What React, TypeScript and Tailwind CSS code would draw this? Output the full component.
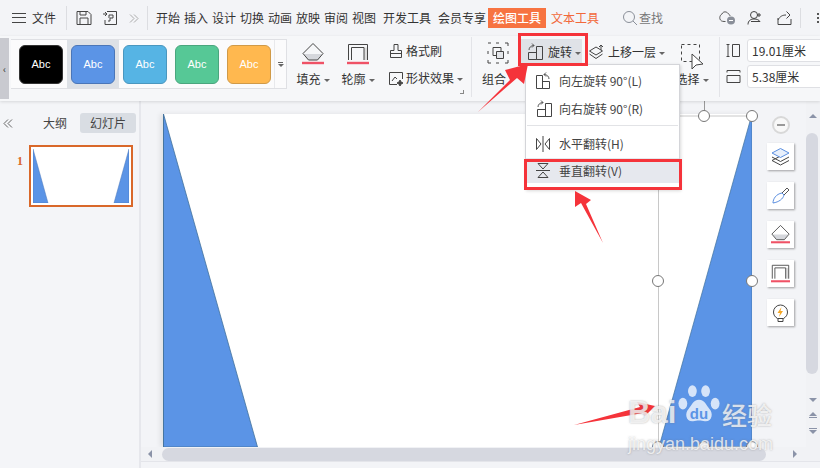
import { ReactNode } from 'react';

const tabs = ['开始', '插入', '设计', '切换', '动画', '放映', '审阅', '视图'];

const styles = [
  { bg: 'bg-black border-[#333]', hover: false },
  { bg: 'bg-[#5b94e6] border-[#4a76b8]', hover: true },
  { bg: 'bg-[#56b4e4] border-[#4a97bf]', hover: false },
  { bg: 'bg-[#56c896] border-[#4aa67e]', hover: false },
  { bg: 'bg-[#ffb84f] border-[#d09a48]', hover: false },
];

function Caret() {
  return <span className="inline-block w-0 h-0 border-x-[3px] border-x-transparent border-t-[3px] border-t-[#666] ml-[3px] mb-[2px]" />;
}

function Icon({ w = 18, h = 18, children }: { w?: number; h?: number; children: ReactNode }) {
  return (
    <svg width={w} height={h} viewBox={`0 0 ${w} ${h}`} fill="none" stroke="#444" strokeWidth="1" className="shrink-0">
      {children}
    </svg>
  );
}

function RotateLeft() {
  return (
    <Icon>
      <path d="M1.500 3.500h6v13h-6zM7.500 9.500h7v7h-7z" />
      <path d="M14 7c0-2.500-2-4.500-5-4.500M11 .5l-2 2 2 2" stroke="#555" />
    </Icon>
  );
}

function RotateRight() {
  return (
    <Icon>
      <path d="M10.500 3.500h6v13h-6zM2.500 9.500h8v7h-8z" />
      <path d="M3 7c0-2.500 2-4.500 5-4.500M6 .5l2 2-2 2" stroke="#555" />
    </Icon>
  );
}

function SideCard({ children }: { children: ReactNode }) {
  return (
    <div className="w-[27px] h-[27px] bg-white flex items-center justify-center shadow-[1px_1px_2px_rgba(0,0,0,0.35)]">
      {children}
    </div>
  );
}

function FillIcon({ size = 22 }: { size?: number }) {
  return (
    <svg width={size} height={size} viewBox="0 0 22 22" fill="none" className="shrink-0">
      <path d="M2 11h18l-4.500 6h-9z" fill="#d5d7dc" />
      <path d="M11 .5 1 10.500 6.500 17h9L21 10.500z" stroke="#444" />
      <path d="M0 20h22" stroke="#ef5266" strokeWidth="2.400" />
    </svg>
  );
}

function OutlineIcon({ size = 22 }: { size?: number }) {
  return (
    <svg width={size} height={size} viewBox="0 0 22 22" fill="none" className="shrink-0">
      <path d="M17 4.500h3.500V17H17z" fill="#ddd" />
      <path d="M1.500 17V1.500h19V17M4.500 17V4.500h12.500V17" stroke="#444" />
      <path d="M0 20h22" stroke="#ef5266" strokeWidth="2.400" />
    </svg>
  );
}

function DoubleChevron({ color, left = false }: { color: string; left?: boolean }) {
  return (
    <svg width="10" height="9" viewBox="0 0 10 9" fill="none" stroke={color} className="shrink-0">
      <path d={left ? 'M5 .5 1 4.500 5 8.500M9 .5 5 4.500 9 8.500' : 'M1 .5 5 4.500 1 8.500M5 .5 9 4.500 5 8.500'} />
    </svg>
  );
}

function Watermark() {
  return (
    <div className="absolute left-[628px] top-[382px] w-[192px] h-[70px] text-white/75 [text-shadow:0_0_2px_rgba(110,110,110,0.55)] pointer-events-none select-none">
      <div className="absolute left-0 top-[14px] text-[31px] leading-[34px] font-bold font-['Liberation_Sans',sans-serif]">Bai</div>
      <svg width="44" height="46" viewBox="0 0 60 56" className="absolute left-[49px] top-0" fill="currentColor">
        <ellipse cx="8" cy="26" rx="6" ry="8" />
        <ellipse cx="21" cy="9" rx="6" ry="8" />
        <ellipse cx="39" cy="9" rx="6" ry="8" />
        <ellipse cx="52" cy="26" rx="6" ry="8" />
        <path d="M30 21c-8 0-10 8-14 12-6 6-4 18 6 17 3 0 5-1 8-1s5 1 8 1c10 1 12-11 6-17-4-4-6-12-14-12z" />
      </svg>
      <div className="absolute left-[59px] top-[24px] w-[24px] text-center text-[#5b94e6] [text-shadow:none] text-[15px] leading-[16px] font-bold font-['Liberation_Sans',sans-serif]">du</div>
      <div className="absolute left-[94px] top-[15px] text-[25px] leading-[34px] font-medium font-['Noto_Sans_CJK_SC',sans-serif]">经验</div>
      <div className="absolute left-0 top-[52px] text-[18px] leading-[20px] font-['Liberation_Sans',sans-serif]">jingyan.baidu.com</div>
    </div>
  );
}

export default function App() {
  return (
    <div className="relative w-[820px] h-[468px] overflow-hidden flex flex-col bg-[#f3f4f7] text-[12px] leading-[16px] text-[#333] font-['Noto_Sans_CJK_SC','Liberation_Sans',sans-serif]">
      {/* Title bar */}
      <div className="h-[36px] flex items-center shrink-0 bg-[#f3f4f7]">
        <div className="ml-[12px] w-[14px] h-[10px] border-y border-[#444] relative shrink-0">
          <div className="absolute left-0 right-0 top-[3px] h-px bg-[#444]" />
        </div>
        <span className="ml-[6px] w-[28px] shrink-0">文件</span>
        <div className="ml-[6px] w-px h-[24px] bg-[#dcdde1] shrink-0" />
        <div className="ml-[9px] flex items-center gap-[10px] shrink-0">
          <Icon w={16} h={16}>
            <path d="M1 1.500h11l3 3v10H1zM4 14.500V8h8v6.500M4 1.500V5h6V1.500" />
          </Icon>
          <Icon w={16} h={16}>
            <path d="M1 4h3M3 6l2-2-2-2M5 1.500h9.500v13H3V10" />
            <path d="M7 8V5h4v3H8v3H6" />
          </Icon>
        </div>
        <span className="ml-[11px] shrink-0">
          <DoubleChevron color="#aaa" />
        </span>
        <div className="ml-[8px] w-px h-[24px] bg-[#dcdde1] shrink-0" />
        <div className="ml-[8px] flex gap-[4px] shrink-0">
          {tabs.map((t) => (
            <span key={t} className="w-[24px]">{t}</span>
          ))}
        </div>
        <span className="ml-[7px] w-[48px] shrink-0">开发工具</span>
        <span className="ml-[7px] w-[48px] shrink-0">会员专享</span>
        <span className="ml-[2px] w-[58px] h-[20px] bg-[#f77341] text-white text-center leading-[20px] font-medium shrink-0">绘图工具</span>
        <span className="ml-[5px] w-[48px] text-[#f2683a] shrink-0">文本工具</span>
        <svg width="16" height="16" viewBox="0 0 16 16" fill="none" stroke="#8a8f99" className="ml-[23px] shrink-0">
          <circle cx="7" cy="7" r="5.500" />
          <path d="M11 11l4 4" />
        </svg>
        <span className="ml-[1px] w-[24px] text-[#777] shrink-0">查找</span>
        <div className="ml-[56px] flex items-center gap-[10px] shrink-0">
          <svg width="18" height="16" viewBox="0 0 18 16" fill="none" stroke="#555" className="shrink-0">
            <path d="M9 3.500C8 1.500 4 1 3 4 1 5 0 8 1.500 10c1 1.500 3 1.500 5 1.500" />
            <path d="M9 3.500c1 .5 2 1.500 2 2.500" />
            <circle cx="12" cy="10.500" r="4" fill="#8a8f99" stroke="none" />
            <path d="M10 10.500h4" stroke="#fff" />
          </svg>
          <Icon w={16} h={16}>
            <circle cx="7" cy="5" r="3.500" />
            <path d="M1 14.500c0-4 3-5.500 6-5.500 3 0 5 1 6 2.500H4M12 3v4M10 5h4" />
          </Icon>
          <span className="ml-[4px]">
            <Icon w={16} h={16}>
              <path d="M1 8v6.500h13V9M1 10c2-4 5-5 8-5M9.500 1.500 13 5l-3.500 3.500" />
            </Icon>
          </span>
        </div>
        <div className="ml-[7px] w-px h-[20px] bg-[#dcdde1] shrink-0" />
        <div className="ml-[16px] flex flex-col gap-[2px] shrink-0">
          <span className="w-[2px] h-[2px] bg-[#555]" />
          <span className="w-[2px] h-[2px] bg-[#555]" />
          <span className="w-[2px] h-[2px] bg-[#555]" />
        </div>
      </div>

      {/* Ribbon */}
      <div className="h-[65px] shrink-0 bg-[#f6f7f9] shadow-[0_1px_3px_rgba(0,0,0,0.12)] flex z-10 relative">
        <div className="w-[9px] h-[61px] mt-[2px] shrink-0 bg-[#c9cad0] flex items-center justify-center text-[10px] text-[#333]">‹</div>
        <div className="ml-[2px] mt-[3px] w-[276px] h-[50px] shrink-0 border border-l-0 border-[#dfe0e4] bg-[#fbfbfc] flex items-center">
          <div className="w-[264px] pl-[8px] flex items-center gap-[8px] border-r border-[#e8e9ec] h-full shrink-0">
            {styles.map((s) => (
              <div key={s.bg} className={s.hover ? 'w-[52px] -mx-[4px] h-full flex items-center justify-center bg-[#dde1e6] shrink-0' : 'w-[44px] h-full flex items-center justify-center shrink-0'}>
                <div className={`w-[44px] h-[39px] rounded-[6px] border flex items-center justify-center text-[11px] text-white font-['Liberation_Sans',sans-serif] ${s.bg}`}>
                  Abc
                </div>
              </div>
            ))}
          </div>
          <div className="flex-1 flex flex-col items-center">
            <div className="w-[5px] h-px bg-[#666] mb-[1px]" />
            <div className="w-0 h-0 border-x-[3px] border-x-transparent border-t-[3px] border-t-[#666]" />
          </div>
        </div>

        <div className="ml-[10px] w-[32px] mt-[7px] flex flex-col items-center gap-[6px] shrink-0">
          <FillIcon />
          <span className="whitespace-nowrap">填充<Caret /></span>
        </div>
        <div className="ml-[13px] w-[32px] mt-[7px] flex flex-col items-center gap-[6px] shrink-0">
          <OutlineIcon />
          <span className="whitespace-nowrap">轮廓<Caret /></span>
        </div>

        <div className="ml-[14px] w-[71px] flex flex-col shrink-0 mt-[7px] gap-[11px]">
          <div className="flex items-center gap-[2px]">
            <Icon w={16} h={16}>
              <path d="M6 1.500h4v6h3.500v7h-11v-7H6zM2.500 10.500h11" />
            </Icon>
            <span>格式刷</span>
          </div>
          <div className="flex items-center gap-[2px] whitespace-nowrap">
            <Icon w={16} h={16}>
              <path d="M9 14.500H1.500v-12h13V9" />
              <path d="M4 11l3-4 2 2" />
              <path d="M12 10l1 2 2 1-2 1-1 2-1-2-2-1 2-1z" fill="#444" />
            </Icon>
            <span>形状效果<Caret /></span>
          </div>
        </div>

        <div className="w-[13px] relative border-r border-[#e3e4e8] mt-[1px] h-[60px] shrink-0">
          <div className="absolute right-[7px] bottom-[3px] w-[4px] h-[4px] border-r border-b border-[#888]" />
        </div>

        <div className="ml-[10px] w-[32px] mt-[6px] flex flex-col items-center gap-[7px] shrink-0">
          <svg width="22" height="22" viewBox="0 0 22 22" fill="none" stroke="#444" className="shrink-0">
            <path d="M6 5.500h8v8H6z" />
            <path d="M9.500 9.500h7v7h-7z" fill="#e4e6ea" />
            <path d="M1 1h3M9 1h3M18 1h3v3M1 9v3M21 9v3M1 18v3h3M9 21h3M18 21h3v-3" />
          </svg>
          <span className="whitespace-nowrap pr-[8px]">组合</span>
        </div>

        <div className="ml-[7px] mt-[3px] w-[61px] h-[25px] bg-[#dfe2e7] flex items-center pl-[5px] gap-[4px] shrink-0">
          <RotateRight />
          <span className="whitespace-nowrap">旋转<Caret /></span>
        </div>
        <div className="ml-[6px] mt-[7px] h-[17px] flex items-center gap-[4px] whitespace-nowrap shrink-0 w-[80px]">
          <Icon w={16} h={16}>
            <path d="M8 3 1.500 7 8 11l6.500-4zM1.500 10 8 14.500l6.500-4.500M13 1v5M11 3l2-2 2 2" />
          </Icon>
          <span>上移一层<Caret /></span>
        </div>
        <div className="ml-[8px] w-[32px] mt-[7px] flex flex-col items-center shrink-0">
          <svg width="24" height="28" viewBox="0 0 24 28" fill="none" className="shrink-0">
            <rect x="1.500" y="1.500" width="18" height="17" stroke="#444" strokeDasharray="3 3" />
            <path d="M12 11v15l4-4 7-1z" fill="#fff" stroke="#444" />
          </svg>
          <span className="whitespace-nowrap">选择<Caret /></span>
        </div>
        <div className="ml-[11px] w-px h-[60px] mt-[1px] bg-[#e3e4e8] shrink-0" />
        <div className="ml-[6px] flex flex-col gap-[3px] mt-[3px] shrink-0">
          <div className="flex items-center gap-[6px]">
            <Icon w={15} h={15}>
              <path d="M.5 1.500h3M.5 13.500h3M2 1.500v12M6.500 1.500h7v12h-7z" />
            </Icon>
            <div className="w-[80px] h-[23px] bg-white border border-[#dfe0e4] rounded-[3px] pl-[4px] leading-[21px] whitespace-nowrap">19.01厘米</div>
          </div>
          <div className="flex items-center gap-[6px]">
            <Icon w={15} h={15}>
              <path d="M1 1.500h13M1 3.500v-2M14 3.500v-2M1 6.500h13v7H1z" />
            </Icon>
            <div className="w-[80px] h-[23px] bg-white border border-[#dfe0e4] rounded-[3px] pl-[4px] leading-[21px] whitespace-nowrap">5.38厘米</div>
          </div>
        </div>
      </div>

      {/* Main */}
      <div className="flex-1 flex min-h-0">
        <div className="w-[141px] shrink-0 bg-[#f4f5f8] pt-[12px] border-r-2 border-[#e6e7ec]">
          <div className="flex items-center h-[20px]">
            <span className="ml-[3px] w-[40px]">
              <DoubleChevron color="#666" left />
            </span>
            <span className="text-[#444]">大纲</span>
            <span className="ml-[13px] w-[56px] h-[20px] rounded-[3px] bg-[#d9dde3] text-center leading-[20px] text-[#444]">幻灯片</span>
          </div>
          <div className="flex mt-[12px]">
            <span className="ml-[17px] w-[12px] mt-[8px] text-[#d9682a] text-[12px] font-bold font-['Liberation_Serif',serif]">1</span>
            <div className="w-[104px] h-[62px] border-2 border-[#d9682a] bg-white p-[2px]">
              <svg width="96" height="54" viewBox="0 0 96 54">
                <path d="M0 0v54h15z" fill="#5b94e6" stroke="#4a76b8" strokeWidth=".5" />
                <path d="M96 0v54H81z" fill="#5b94e6" stroke="#4a76b8" strokeWidth=".5" />
              </svg>
            </div>
          </div>
        </div>

        <div className="flex-1 flex flex-col min-w-0">
          <div className="flex-1 flex min-h-0">
            <div className="flex-1 min-w-0 flex pl-[22px] pt-[13px]">
              <div className="relative w-[589px] h-[333px] bg-white shadow-[-3px_0_5px_rgba(0,0,0,0.08)] shrink-0">
                <svg width="589" height="333" viewBox="0 0 589 333" className="block">
                  <path d="M.5 0v333M.5 0v333h94z" fill="#5b94e6" stroke="#41719c" strokeWidth=".8" />
                  <path d="M589 0v333h-93z" fill="#5b94e6" stroke="#41719c" strokeWidth=".7" />
                  <path d="M495.500 2h94v331h-94z" fill="none" stroke="#c8c8c8" />
                </svg>
                <div className="absolute left-[541px] -top-[14px] w-px h-[16px] bg-[#999]" />
                {[
                  [541, 2],
                  [589, 2],
                  [495, 167],
                  [589, 167],
                  [495, 333],
                  [541, 333],
                  [589, 333],
                ].map(([x, y]) => (
                  <div
                    key={`${x}-${y}`}
                    className="absolute w-[12px] h-[12px] -ml-[6px] -mt-[6px] rounded-full bg-white border border-[#777]"
                    style={{ left: x, top: y }}
                  />
                ))}
              </div>
              <div className="ml-[15px] flex flex-col items-center gap-[12px] pt-[2px] shrink-0">
                <div className="w-[18px] h-[18px] -mb-[3px] rounded-full border-2 border-[#d8d8d8] bg-[#f8f8f8] flex items-center justify-center">
                  <div className="w-[8px] h-[2px] bg-[#999]" />
                </div>
                <SideCard>
                  <svg width="19" height="19" viewBox="0 0 19 19" fill="none" stroke="#444">
                    <path d="M9.500 9 1 13.500l8.500 4.500 8.500-4.500M1 10l8.500 4.500L18 10" />
                    <path d="M9.500 1.500 1 6l8.500 4.500L18 6z" stroke="#5b8fe0" fill="#e8f0fc" />
                  </svg>
                </SideCard>
                <SideCard>
                  <svg width="19" height="19" viewBox="0 0 19 19" fill="none">
                    <path d="M11 7l5-5 2 2-5 5z" stroke="#555" />
                    <path d="M11 7l2 2c-1 4-5 7-11 8 0-4 3-9 9-10z" stroke="#5b8fe0" />
                  </svg>
                </SideCard>
                <SideCard>
                  <FillIcon size={19} />
                </SideCard>
                <SideCard>
                  <OutlineIcon size={19} />
                </SideCard>
                <SideCard>
                  <svg width="17" height="20" viewBox="0 0 17 20" fill="none" stroke="#444">
                    <path d="M5.500 15.500C3 14 1.500 12 1.500 9a7 7 0 0 1 14 0c0 3-1.500 5-4 6.500zM6 15.500V18.500h5v-3" />
                    <path d="M9.500 4 5.500 10H8l-1 4 4-6H8.500z" fill="#f5a623" stroke="none" />
                  </svg>
                </SideCard>
              </div>
            </div>
            <div className="w-[14px] shrink-0 bg-[#f1f2f5] flex flex-col items-center">
              <div className="mt-[13px] w-0 h-0 border-x-[4px] border-x-transparent border-b-[4px] border-b-[#8b93a8]" />
              <div className="mt-[15px] w-[12px] h-[241px] rounded-full bg-[#d6d8e0] -ml-[2px]" />
              <div className="mt-[24px] w-0 h-0 border-x-[4px] border-x-transparent border-t-[4px] border-t-[#8b93a8]" />
              <div className="mt-[10px] flex flex-col items-center gap-[1px]">
                <div className="w-0 h-0 border-x-[4px] border-x-transparent border-b-[4px] border-b-[#8b93a8]" />
                <div className="w-[8px] h-px bg-[#8b93a8]" />
              </div>
              <div className="mt-[10px] flex flex-col items-center gap-[1px]">
                <div className="w-[8px] h-px bg-[#8b93a8]" />
                <div className="w-0 h-0 border-x-[4px] border-x-transparent border-t-[4px] border-t-[#8b93a8]" />
              </div>
            </div>
          </div>
          <div className="h-[14px] shrink-0 bg-[#f1f2f5] flex items-center relative z-10">
            <div className="ml-[7px] w-0 h-0 border-y-[4px] border-y-transparent border-r-[4px] border-r-[#8b93a8]" />
            <div className="ml-[10px] w-[604px] h-[13px] rounded-full bg-[#d6d8e0]" />
            <div className="ml-[27px] w-0 h-0 border-y-[4px] border-y-transparent border-l-[4px] border-l-[#8b93a8]" />
          </div>
          <div className="h-[7px] shrink-0 border-t border-[#e4e5ea] bg-[#f3f4f7]" />
        </div>
      </div>

      {/* Rotate menu */}
      <div className="absolute left-[525px] top-[64px] w-[155px] h-[126px] z-20 bg-white border border-[#d4d5d9] shadow-[1px_1px_3px_rgba(0,0,0,0.15)] pt-[2px] text-[#444]">
        <div className="h-[28px] flex items-center pl-[9px] gap-[6px] whitespace-nowrap">
          <RotateLeft />
          <span>向左旋转 90°(L)</span>
        </div>
        <div className="h-[28px] flex items-center pl-[9px] gap-[6px] whitespace-nowrap">
          <RotateRight />
          <span>向右旋转 90°(R)</span>
        </div>
        <div className="my-[2px] h-px bg-[#e2e3e6] mx-[1px]" />
        <div className="h-[32px] flex items-center pl-[9px] gap-[6px] whitespace-nowrap">
          <Icon>
            <path d="M8 1v16M1.500 3.500l4.500 5.500-4.500 5.500zM14.500 3.500 10 9l4.500 5.500z" />
          </Icon>
          <span>水平翻转(H)</span>
        </div>
        <div className="h-[25px] -mt-[2px] bg-[#e6e8ee] flex items-center pl-[9px] gap-[6px] whitespace-nowrap">
          <Icon>
            <path d="M1 8.500h14M3 1.500h10L8 7zM3 15.500h10L8 10z" />
          </Icon>
          <span>垂直翻转(V)</span>
        </div>
      </div>

      {/* Red annotation boxes */}
      <div className="absolute left-[518px] top-[33px] w-[70px] h-[33px] border-[3px] border-[#f5333a] z-30 pointer-events-none" />
      <div className="absolute left-[524px] top-[159px] w-[158px] h-[31px] border-[3px] border-[#f5333a] z-30 pointer-events-none" />

      {/* Red arrows */}
      <svg width="820" height="468" viewBox="0 0 820 468" className="absolute left-0 top-0 z-30 pointer-events-none">
        <path d="M478 112 510 80 505 70 528 64 524 84 517 78z" fill="#f5333a" />
        <path d="M575 191 591 200 586 204 603 243 581 203 575 207z" fill="#f5333a" />
        <path d="M574 425 640 407 637 402 655 406 645 416 643 413z" fill="#f5333a" />
      </svg>

      <div className="absolute left-0 top-0 w-full h-full z-40 pointer-events-none">
        <Watermark />
      </div>
    </div>
  );
}
